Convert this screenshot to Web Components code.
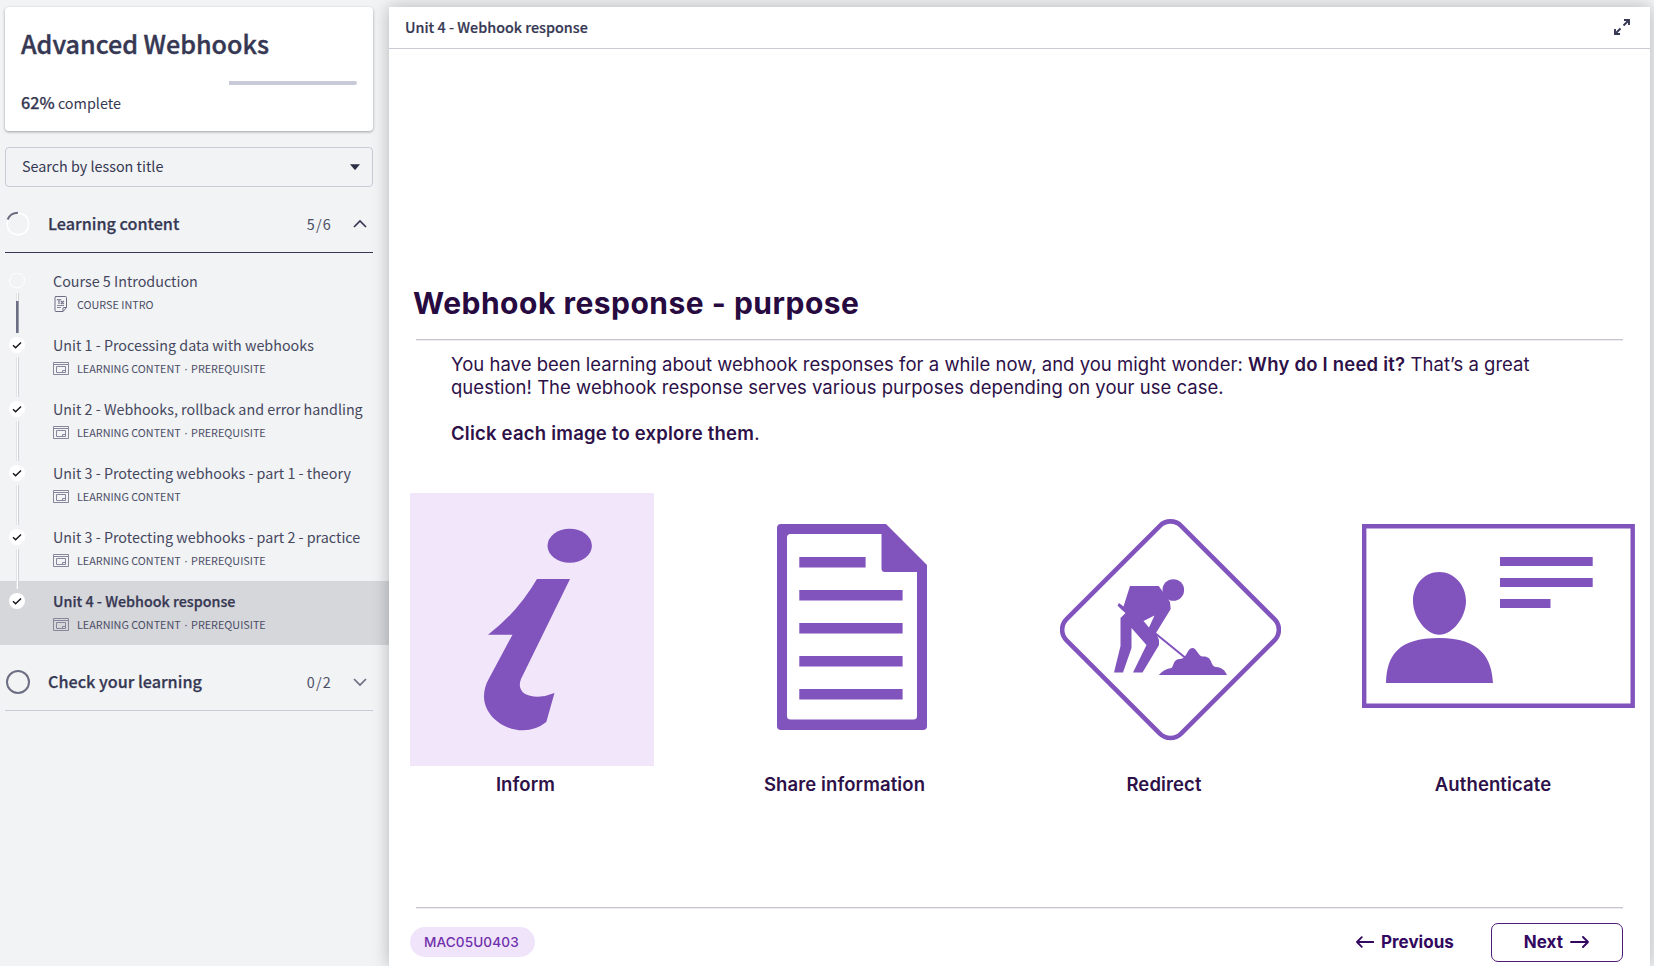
<!DOCTYPE html>
<html lang="en">
<head>
<meta charset="utf-8">
<title>Advanced Webhooks</title>
<style>
html,body{margin:0;height:100%;background:#f1f3f5;overflow:hidden}
body{font-family:"Noto Sans CJK SC","Source Sans Pro",sans-serif;color:#363853}
</style>
</head>
<body>
<course-app></course-app>
<script>
const define = (name, css, html) => {
  const t = document.createElement('template');
  t.innerHTML = `<style>*{box-sizing:border-box}${css}</style>${html}`;
  customElements.define(name, class extends HTMLElement {
    constructor() {
      super();
      this.attachShadow({mode: 'open'}).append(t.content.cloneNode(true));
    }
  });
};

define('course-progress', `
:host{display:block;height:124px;background:#fff;border-radius:4px;padding:19px 16px 0;box-shadow:0 1px 3px rgba(0,0,0,.35)}
h1{margin:0;font-size:25.1px;line-height:34px;font-weight:500;white-space:nowrap;-webkit-text-stroke:.4px}
.bar{height:4px;margin-top:21px;display:flex;justify-content:flex-end}
.bar i{width:128px;background:#c9cad7;border-radius:0 2px 2px 0}
p{margin:5px 0 0;font-size:14.4px;line-height:24px}
b{font-weight:500;font-size:16.2px;-webkit-text-stroke:.25px}`,
`<h1><slot name="title"></slot></h1><div class="bar"><i></i></div><p><b><slot name="percent"></slot></b> complete</p>`);

define('lesson-search', `
:host{display:flex;align-items:center;justify-content:space-between;height:40px;margin-top:16px;border:1px solid #c9cad7;border-radius:4px;padding:0 12px 0 16px;font-size:14.35px;line-height:24px}
span{padding-bottom:2px}`,
`<span><slot></slot></span><svg width="10" height="6" viewBox="0 0 10 6"><path d="M0 .2h10L5.600 5.600q-.6.600-1.200 0z" fill="#2b2d45"/></svg>`);

define('course-section', `
:host{display:flex;align-items:center;height:var(--h,65px);border-bottom:1px solid var(--line,#363853);padding:0 6px 0 0}
.t{flex:1;margin-left:17px;font-size:16.2px;line-height:24px;font-weight:500;white-space:nowrap;padding-bottom:1px;-webkit-text-stroke:.25px}
.n{font-size:14.4px;line-height:24px;margin-right:21px;letter-spacing:1.2px;color:#4c4e66}`,
`<slot name="ring"></slot><span class="t"><slot></slot></span><span class="n"><slot name="count"></slot></span><slot name="chevron"></slot>`);

customElements.define('lesson-item', class extends HTMLElement {
  constructor() {
    super();
    const kind = this.getAttribute('kind');
    const intro = kind === 'intro';
    const last = this.hasAttribute('active');
    const icon = intro
      ? `<svg width="16" height="16" viewBox="0 0 16 16" fill="none" stroke="#6c6e83"><path d="M2.500.5h10q1 0 1 1v10l-3.500 4H3q-1 0-1-1v-13q0-1 1-1zM13.500 11.500h-3q-.5 0-.5.5v3.500" stroke-width="1"/><path d="M4 9.500h7M4 11.500h4" stroke-width=".8"/><path d="M3.800 3.700h4.400M6 3.700v4.300M7.800 5l3 3M10.800 5l-3 3" stroke-width="1.100"/></svg>`
      : `<svg width="16" height="13" viewBox="0 0 16 13" fill="none" stroke="#85879a"><path d="M.5.5h15v12H.5zM.5 2.500h15M3.500 4.500h9v6h-9zM9.500 10.500v-2h3" stroke-width="1"/></svg>`;
    const dot = intro
      ? `<svg width="16" height="16"><circle cx="8" cy="7.500" r="7.500" fill="none" stroke="#fff"/></svg>`
      : `<svg width="16" height="16"><circle cx="8" cy="8" r="8" fill="#fff"/><path d="M4 8.300l2.600 2.400 5.400-5.200" fill="none" stroke="#16161d" stroke-width="1.500"/></svg>`;
    this.attachShadow({mode: 'open'}).innerHTML = `<style>
:host{display:grid;box-sizing:border-box;grid-template-columns:44px 1fr;height:64px;padding-left:9px;position:relative}
:host([active]){background:#d6d7db}
.rail{padding-top:12px;display:flex;flex-direction:column;align-items:flex-start}
svg{display:block;flex:none}
.line{flex:none;box-sizing:border-box;width:3px;height:40px;margin:4px 0 0 7px;background:#fff;border-left:1px solid #e2e3e7;border-right:1px solid #d0d1d7;position:relative;z-index:1}
.line.part{border:0;background:linear-gradient(90deg,#e2e3e7 1px,#fff 1px 2px,#d0d1d7 2px) 0 0/3px 8px no-repeat,linear-gradient(90deg,#6c6e83 2px,#9a9bab 2px)}
.t{font-size:14.320px;line-height:24px;margin-top:8px;white-space:nowrap;color:#45475e}
:host([active]) .t{font-weight:500;color:#363853;-webkit-text-stroke:.25px}
.m{display:flex;align-items:center;gap:8px;font-size:10.800px;line-height:16px;margin-top:3px;height:16px;color:#4c4e66;white-space:nowrap}
</style>
<div class="rail">${dot}${last ? '' : `<div class="line ${intro ? 'part' : ''}"></div>`}</div>
<div><div class="t"><slot></slot></div><div class="m">${icon}<span><slot name="meta"></slot></span></div></div>`;
  }
});

define('slide-tile', `
:host{display:block;margin-left:var(--gap,0);width:var(--w)}
.l{font:600 18.500px/24px Inter,sans-serif;letter-spacing:.1px;color:#2d1148;text-align:center;padding-right:var(--shift);margin-top:6px;white-space:nowrap}`,
`<slot name="art"></slot><div class="l"><slot></slot></div>`);

define('course-app', `
:host{display:flex;height:966px;width:1654px}
aside{width:389px;padding-top:7px;flex:none}
.in{margin:0 16px 0 5px}
ul{margin:8px 0 0;padding:0}
.d{font-family:"Noto Sans",sans-serif;margin:0 1.300px}
main{width:1261px;margin-top:7px;background:#fff;box-shadow:0 0 16px rgba(0,0,0,.26);display:flex;flex-direction:column;position:relative}
header{height:42px;border-bottom:1px solid #c9cad7;display:flex;align-items:center;justify-content:space-between;padding:0 20px 3px 16px;font-size:14.350px;font-weight:500;-webkit-text-stroke:.2px}
header svg{margin-top:2px}
svg{display:block}
.slide{padding:0 27px;font-family:Inter,sans-serif;color:#2d1148}
h2{font:700 30px/40px Inter,sans-serif;letter-spacing:.5px;margin:234px 0 0 -3px;color:#270a3f;height:56px;white-space:nowrap}
hr{margin:0;border:0;border-top:1px solid #c9c4cb;border-bottom:1px solid #efecef}
.copy{margin:12px 0 0 35px;font-size:18.500px;letter-spacing:.025px;line-height:23px;white-space:nowrap}
.copy div+div:last-child{margin-top:23px}
.copy b{font-weight:600;letter-spacing:.22px}
.tiles{display:flex;margin:48px 0 0 -6px}
.foot{margin-left:-6px;display:flex;align-items:center;padding-top:13px;height:53px}
.pill{width:125px;height:30px;border-radius:15px;background:#f0e4fb;color:#6f30ab;font:500 13.600px/30px Inter,sans-serif;padding-left:14px;letter-spacing:.1px}
.prev,.next{display:flex;align-items:center;gap:7px;font:700 17px/20px Inter,sans-serif;color:#320860}
.prev{margin-left:821px;width:98px}
.next{margin-left:37px;width:132.500px;height:39px;border:1.500px solid #4b1b78;border-radius:7px;justify-content:center;padding-right:1px}
`,
`<aside>
<div class="in">
<course-progress><span slot="title">Advanced Webhooks</span><span slot="percent">62%</span></course-progress>
<lesson-search>Search by lesson title</lesson-search>
<course-section style="--h:66px;padding-top:8px">
<svg slot="ring" width="26" height="26" viewBox="0 0 26 26" fill="none"><circle cx="13" cy="13" r="11.500" stroke="#d0d1d7"/><circle cx="13" cy="13" r="11" stroke="#fff" stroke-width="1.800"/><path d="M2.600 8.500A11.300 11.300 0 0 1 13 1.700" stroke="#6c6e83" stroke-width="2"/></svg>
Learning content<span slot="count">5/6</span><svg slot="chevron" width="14" height="10" viewBox="0 0 14 10"><path d="M1 8l6-6 6 6" fill="none" stroke="#363853" stroke-width="1.700"/></svg></course-section>
</div>
<ul>
<lesson-item kind="intro">Course 5 Introduction<span slot="meta">COURSE INTRO</span></lesson-item>
<lesson-item>Unit 1 - Processing data with webhooks<span slot="meta">LEARNING CONTENT <span class="d">·</span> PREREQUISITE</span></lesson-item>
<lesson-item>Unit 2 - Webhooks, rollback and error handling<span slot="meta">LEARNING CONTENT <span class="d">·</span> PREREQUISITE</span></lesson-item>
<lesson-item>Unit 3 - Protecting webhooks - part 1 - theory<span slot="meta">LEARNING CONTENT</span></lesson-item>
<lesson-item>Unit 3 - Protecting webhooks - part 2 - practice<span slot="meta">LEARNING CONTENT <span class="d">·</span> PREREQUISITE</span></lesson-item>
<lesson-item active>Unit 4 - Webhook response<span slot="meta">LEARNING CONTENT <span class="d">·</span> PREREQUISITE</span></lesson-item>
</ul>
<div class="in">
<course-section style="--h:66px;--line:#c9cad7;padding-top:8px">
<svg slot="ring" width="26" height="26" viewBox="0 0 26 26" fill="none"><circle cx="13" cy="13" r="11" stroke="#6c6e83" stroke-width="2"/></svg>
Check your learning<span slot="count">0/2</span><svg slot="chevron" width="14" height="10" viewBox="0 0 14 10"><path d="M1 2l6 6 6-6" fill="none" stroke="#6c6e83" stroke-width="1.700"/></svg></course-section>
</div>
</aside>
<main>
<header><span>Unit 4 - Webhook response</span>
<svg width="16" height="16" viewBox="0 0 16 16" fill="none" stroke="#363853" stroke-width="1.900"><path d="M10 1h5v5M15 1 9.500 6.500M6 15H1v-5M1 15l5.500-5.500"/></svg></header>
<div class="slide">
<h2>Webhook response - purpose</h2>
<hr>
<div class="copy"><div>You have been learning about webhook responses for a while now, and you might wonder: <b>Why do I need it?</b> That’s a great</div>
<div>question! The webhook response serves various purposes depending on your use case.</div>
<div><b>Click each image to explore them</b>.</div></div>
<div class="tiles">
<slide-tile style="--w:244px;--shift:13px"><svg slot="art" width="244" height="273" viewBox="410 493 244 273" fill="#8153bd"><path fill="#f2e7fa" d="M410 493h244v273H410z"/><ellipse cx="569.700" cy="545.800" rx="22.200" ry="17"/><path d="M537 579H570L521 679C517 689 523 696.700 538 696.700Q546 696.500 554.500 693L546.300 722Q536 730.300 523 730.300C503 730.300 484 715 484 696.500Q484 687 489 678.500L512.500 634.700H488Q517 613 537 579Z"/></svg>Inform</slide-tile>
<slide-tile style="--gap:106px;--w:184px;--shift:15px"><svg slot="art" width="184" height="273" viewBox="760 493 184 273" fill="#8153bd"><path fill-rule="evenodd" d="M781 524H886L927 565V726Q927 730 923 730H781Q777 730 777 726V528Q777 524 781 524ZM790.500 534Q787 534 787 537.500V716Q787 719.500 790.500 719.500H913.500Q917 719.500 917 716V572H885Q881.500 572 881.500 568.500V534Z"/><path d="M799.300 557h66.300v10.500h-66.300zM799.300 590h103.300v10.500H799.300zM799.300 623h103.300v10.500H799.300zM799.300 656h103.300v10.500H799.300zM799.300 689h103.300v10.500H799.300z"/></svg>Share information</slide-tile>
<slide-tile style="--gap:116px;--w:221px;--shift:13px"><svg slot="art" width="221" height="273" viewBox="1060 493 221 273" fill="#8153bd"><rect x="1089.500" y="548.700" width="162" height="162" rx="15" transform="rotate(45 1170.500 629.700)" fill="none" stroke="#8153bd" stroke-width="4.600"/><circle cx="1173.300" cy="590" r="10.800"/><path fill-rule="evenodd" d="M1130 586H1158.700L1163 592L1170 602L1170.700 609L1156 633L1159 640V645L1142.500 672.500H1133L1146.500 645L1131.500 628V648L1123 672.500H1114L1120.500 646V618L1125.500 613L1122 610L1117.500 605.500L1119 603L1123.500 606.500ZM1154.500 615.500 1143.500 621 1149 627.500Z"/><path d="M1153 631.500l32 26" stroke="#8153bd" stroke-width="2"/><path d="M1158.700 675Q1164 669 1171.500 668C1174 666 1173 659 1180 659C1187 659 1187 648 1192.300 648C1197 648 1198 656.500 1203 656.500C1213 656 1210 666.500 1216 667C1223 667.500 1225 671 1227 675Z"/></svg>Redirect</slide-tile>
<slide-tile style="--gap:81px;--w:273px;--shift:11px"><svg slot="art" width="273" height="273" viewBox="1362 493 273 273" fill="#8153bd"><path d="M1364.200 526.200h268.500v179.500h-268.500z" fill="none" stroke="#8153bd" stroke-width="4.400"/><path d="M1500 557h92.700v9H1500zM1500 578h92.700v9H1500zM1500 599h50.500v9H1500zM1439.300 572C1454 572 1466 585 1466 601C1466 617 1453 634.700 1439.300 634.700C1426 634.700 1413 617 1413 601C1413 585 1424 572 1439.300 572ZM1386 683C1387 656 1397 638 1439.500 638C1480 638 1492 658 1493 683Z"/></svg>Authenticate</slide-tile>
</div>
<hr style="margin-top:111px">
<div class="foot"><span class="pill">MAC05U0403</span>
<span class="prev"><svg width="19" height="12" viewBox="0 0 19 12" fill="none" stroke="#320860" stroke-width="1.900" stroke-linecap="round" stroke-linejoin="round"><path d="M6 1 1 6l5 5M1 6h17"/></svg>Previous</span>
<span class="next">Next<svg width="19" height="12" viewBox="0 0 19 12" fill="none" stroke="#320860" stroke-width="1.900" stroke-linecap="round" stroke-linejoin="round"><path d="M13 1l5 5-5 5M18 6H1"/></svg></span></div>
</div>
</main>`);
</script>
</body>
</html>
